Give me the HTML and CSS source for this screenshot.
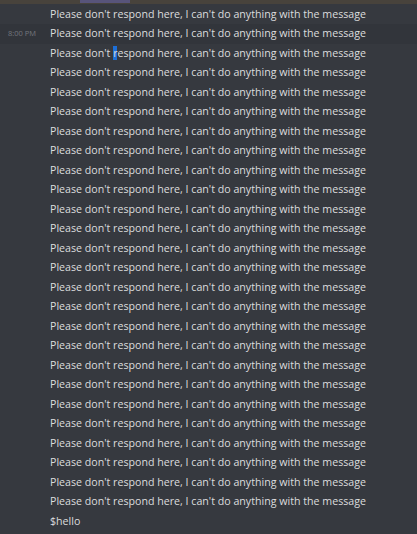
FILE: index.html
```html
<!DOCTYPE html>
<html>
<head>
<meta charset="utf-8">
<link rel="stylesheet" href="styles.css">
</head>
<body>
<div class="topbar"><div class="topbar-tab"></div></div>
<div class="messages">
  <div class="row"><span class="text">Please don't respond here, I can't do anything with the message</span></div>
  <div class="row hover"><span class="time">8:00 PM</span><span class="text">Please don't respond here, I can't do anything with the message</span></div>
  <div class="row"><span class="text">Please don't <span class="caret"></span>respond here, I can't do anything with the message</span></div>
  <div class="row"><span class="text">Please don't respond here, I can't do anything with the message</span></div>
  <div class="row"><span class="text">Please don't respond here, I can't do anything with the message</span></div>
  <div class="row"><span class="text">Please don't respond here, I can't do anything with the message</span></div>
  <div class="row"><span class="text">Please don't respond here, I can't do anything with the message</span></div>
  <div class="row"><span class="text">Please don't respond here, I can't do anything with the message</span></div>
  <div class="row"><span class="text">Please don't respond here, I can't do anything with the message</span></div>
  <div class="row"><span class="text">Please don't respond here, I can't do anything with the message</span></div>
  <div class="row"><span class="text">Please don't respond here, I can't do anything with the message</span></div>
  <div class="row"><span class="text">Please don't respond here, I can't do anything with the message</span></div>
  <div class="row"><span class="text">Please don't respond here, I can't do anything with the message</span></div>
  <div class="row"><span class="text">Please don't respond here, I can't do anything with the message</span></div>
  <div class="row"><span class="text">Please don't respond here, I can't do anything with the message</span></div>
  <div class="row"><span class="text">Please don't respond here, I can't do anything with the message</span></div>
  <div class="row"><span class="text">Please don't respond here, I can't do anything with the message</span></div>
  <div class="row"><span class="text">Please don't respond here, I can't do anything with the message</span></div>
  <div class="row"><span class="text">Please don't respond here, I can't do anything with the message</span></div>
  <div class="row"><span class="text">Please don't respond here, I can't do anything with the message</span></div>
  <div class="row"><span class="text">Please don't respond here, I can't do anything with the message</span></div>
  <div class="row"><span class="text">Please don't respond here, I can't do anything with the message</span></div>
  <div class="row"><span class="text">Please don't respond here, I can't do anything with the message</span></div>
  <div class="row"><span class="text">Please don't respond here, I can't do anything with the message</span></div>
  <div class="row"><span class="text">Please don't respond here, I can't do anything with the message</span></div>
  <div class="row"><span class="text">Please don't respond here, I can't do anything with the message</span></div>
  <div class="row"><span class="text">$hello</span></div>
</div>
</body>
</html>
```
FILE: styles.css
```css
html, body {
  margin: 0;
  padding: 0;
  background: #36393f;
  height: 100%;
  overflow: hidden;
}
body {
  font-family: "Open Sans", "Noto Sans", sans-serif;
  color: #dcddde;
}
.topbar {
  height: 4px;
  background: #48433c;
  position: relative;
}
.topbar-tab {
  position: absolute;
  left: 80px;
  top: 0;
  width: 50px;
  height: 3px;
  background: #58547a;
}
.messages {
  display: flex;
  flex-direction: column;
  padding-top: 0.5px;
}
.row {
  position: relative;
  height: 19.5px;
  display: flex;
  align-items: center;
  padding-left: 50px;
  white-space: nowrap;
}
.row.hover {
  background: #32353b;
}
.time {
  position: absolute;
  left: 8px;
  top: 0;
  line-height: 19.5px;
  font-size: 7.5px;
  color: #72767d;
}
.text {
  font-size: 10.65px;
  line-height: 19.5px;
}
.caret {
  display: inline-block;
  width: 4px;
  height: 14px;
  background: #1d6fd8;
  vertical-align: -3px;
  margin-right: -4px;
}
```
